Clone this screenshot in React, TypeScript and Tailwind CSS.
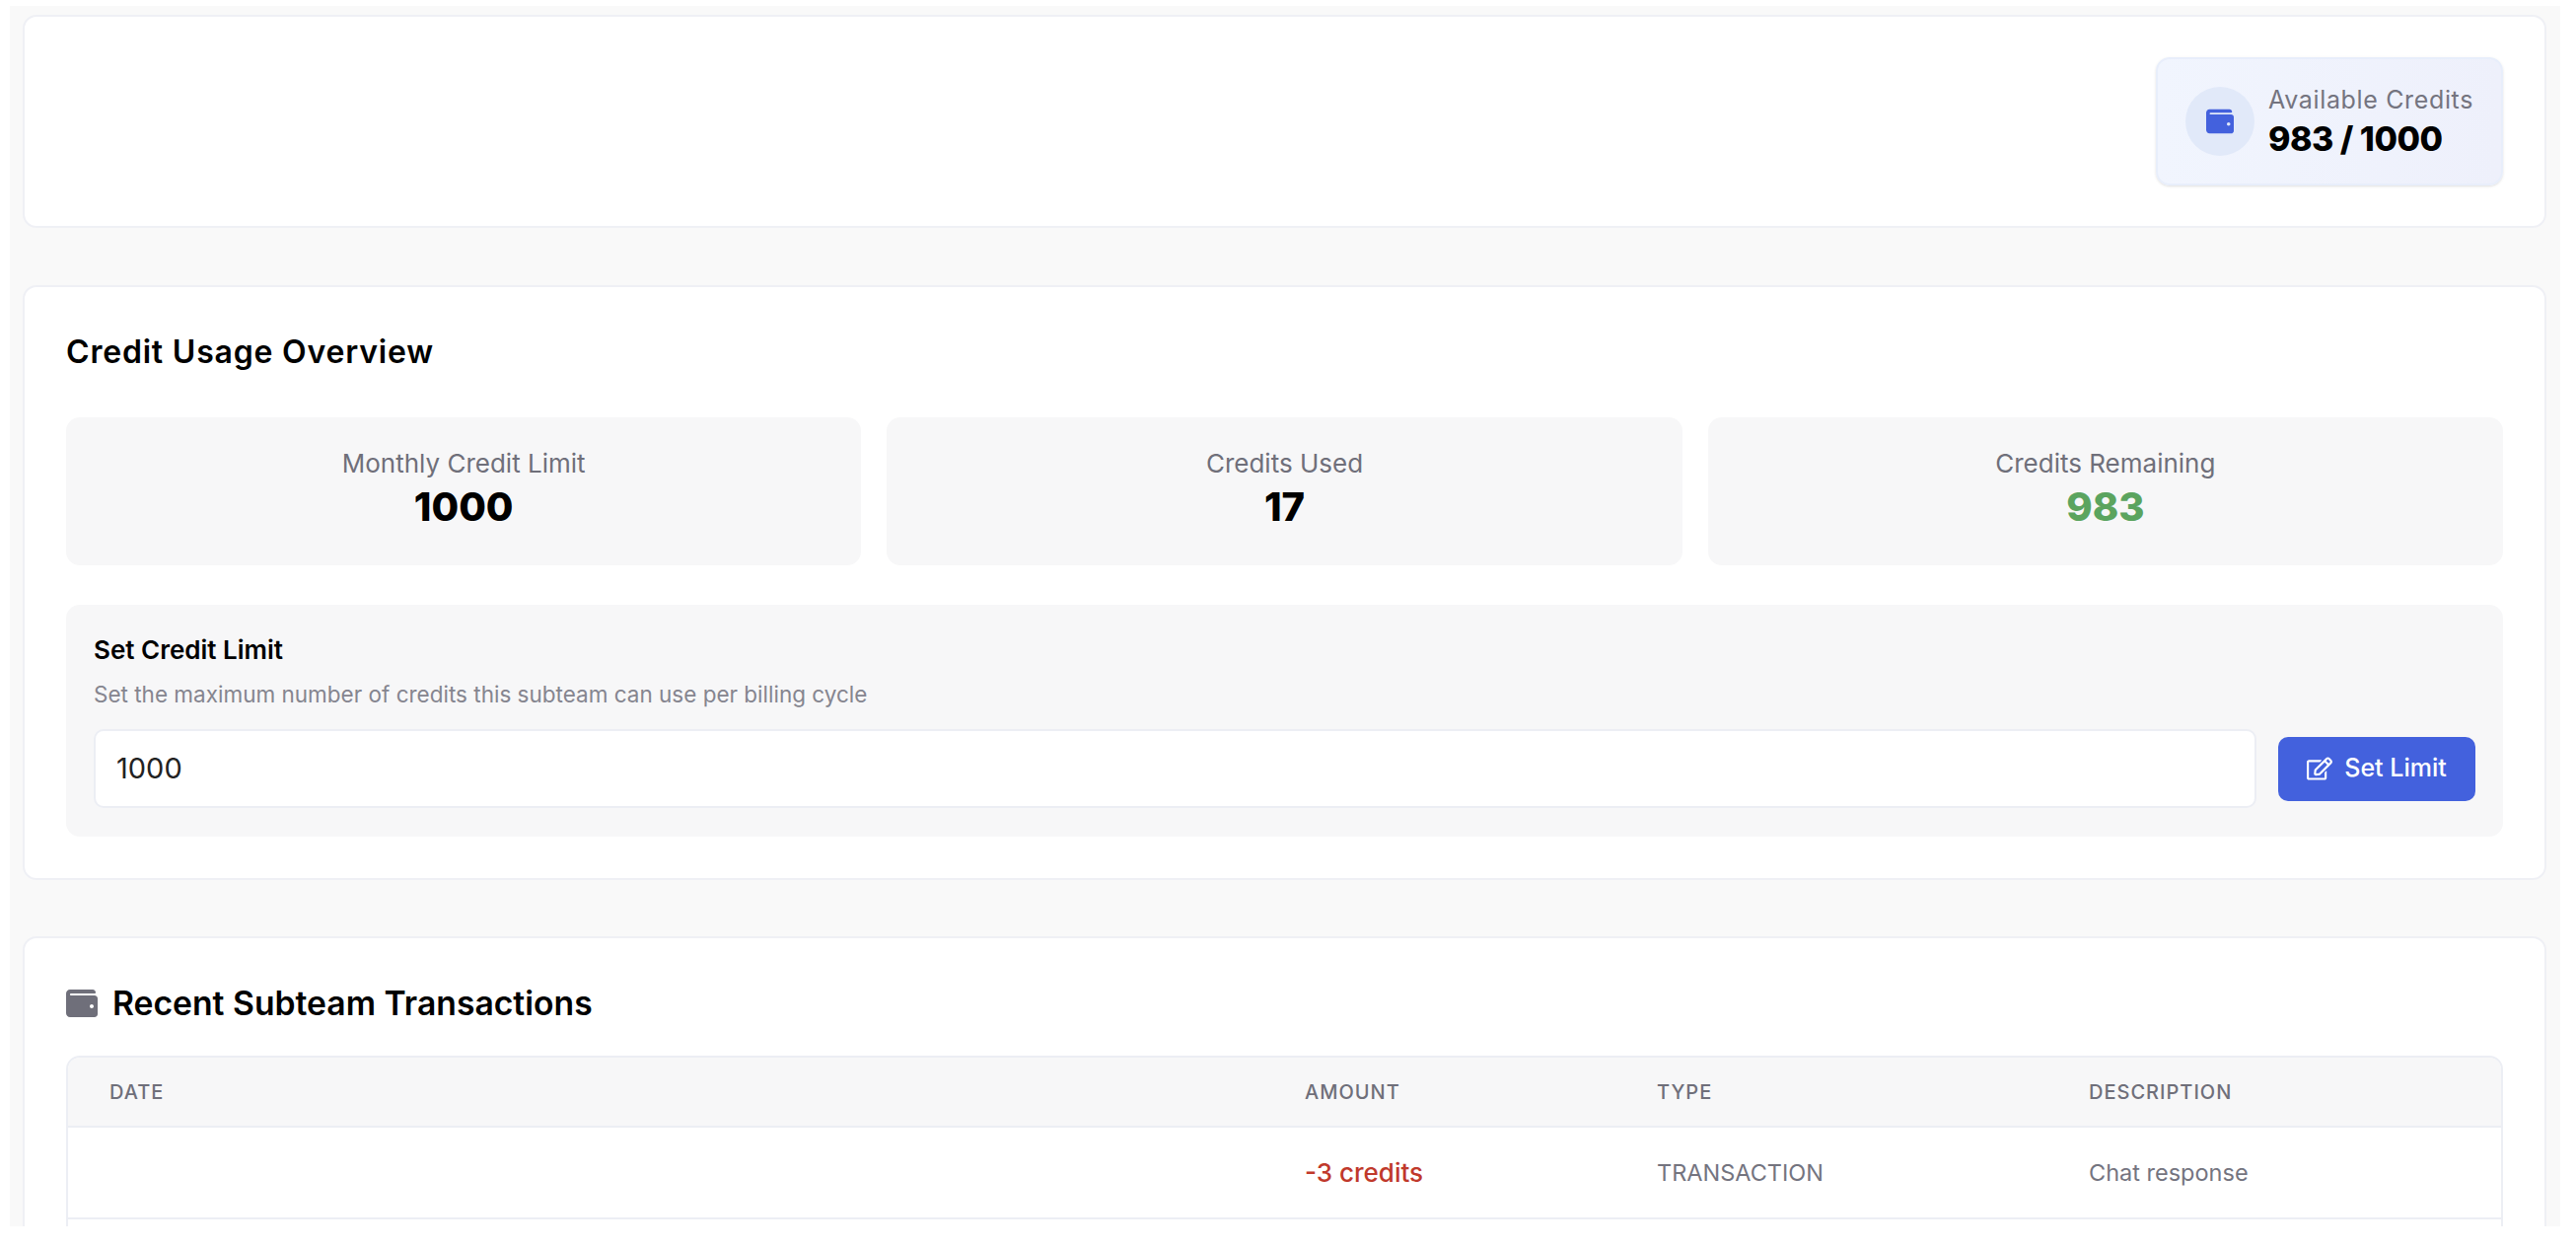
import { FaWallet, FaRegEdit } from "react-icons/fa";

const body = "font-['Inter','Liberation_Sans',sans-serif]";

const stats = [
  { label: "Monthly Credit Limit", value: "1000", color: "text-black" },
  { label: "Credits Used", value: "17", color: "text-black" },
  { label: "Credits Remaining", value: "983", color: "text-[#5ba45f]" },
];

const tableCols = "grid grid-cols-[1210px_357px_438px_1fr]";

export default function App() {
  return (
    <div className={`bg-white min-h-[1266px] pt-[6px] pl-[10px] ${body}`}>
      <div className="w-[2586px] h-[1237px] overflow-hidden bg-[#f9f9f9] pl-[13px] pr-[14px] pt-[9px] flex flex-col">
        {/* Available credits */}
        <section className="h-[216px] shrink-0 bg-white border-2 border-[#eff0f5] rounded-[14px] flex items-center justify-end pr-[42px]">
          <div className="w-[352px] h-[130px] rounded-[14px] border-2 border-[#e8eefb] bg-gradient-to-r from-[#f1f5fe] to-[#eef0fb] shadow-sm flex items-center gap-[14px] pl-[28px]">
            <div className="w-[70px] h-[70px] rounded-full bg-[#e1e9f9] flex items-center justify-center text-[#4361dd]">
              <FaWallet size={28} />
            </div>
            <div className="flex flex-col">
              <span className="text-[25px] leading-[36px] tracking-[0.65px] text-[#74747f]">Available Credits</span>
              <span className="text-[34px] leading-[44px] font-extrabold text-black tracking-[-0.5px]">983 / 1000</span>
            </div>
          </div>
        </section>

        {/* Usage overview */}
        <section className="h-[603px] mt-[58px] shrink-0 bg-white border-2 border-[#eff0f5] rounded-[14px] px-[42px] pt-[46px]">
          <h2 className="text-[32px] leading-[40px] font-semibold tracking-[0.8px] text-black">Credit Usage Overview</h2>
          <div className="grid grid-cols-3 gap-[26px] mt-[46px]">
            {stats.map((s) => (
              <div key={s.label} className="h-[150px] rounded-[14px] bg-[#f7f7f8] flex flex-col items-center pt-[29px]">
                <span className="text-[26px] leading-[36px] text-[#6f6f7a]">{s.label}</span>
                <span className={`text-[40px] leading-[52px] font-extrabold ${s.color}`}>{s.value}</span>
              </div>
            ))}
          </div>
          <div className="h-[235px] mt-[40px] rounded-[14px] bg-[#f7f7f8] px-[28px] pt-[29px]">
            <h3 className="text-[26px] leading-[34px] font-semibold text-black">Set Credit Limit</h3>
            <p className="text-[22.5px] leading-[30px] mt-[13px] text-[#85858f]">
              Set the maximum number of credits this subteam can use per billing cycle
            </p>
            <div className="flex items-center gap-[22px] mt-[20px]">
              <div className="flex-1 h-[80px] rounded-[10px] bg-white border-2 border-[#eceef4] flex items-center pl-[21px] text-[29px] text-[#222]">
                1000
              </div>
              <button className="w-[200px] h-[65px] rounded-[10px] bg-[#4361dd] text-white text-[25px] font-medium flex items-center justify-center gap-[12px]">
                <FaRegEdit size={26} />
                Set Limit
              </button>
            </div>
          </div>
        </section>

        {/* Transactions */}
        <section className="flex-1 mt-[57px] bg-white border-2 border-[#eff0f5] rounded-t-[14px] px-[42px] pt-[46px]">
          <h2 className="flex items-center gap-[15px] text-[33.7px] leading-[40px] font-semibold text-black">
            <FaWallet size={32} className="text-[#6f6f7a]" />
            Recent Subteam Transactions
          </h2>
          <div className="mt-[33px] rounded-t-[14px] border-2 border-[#eceef4]">
            <div className={`${tableCols} h-[71px] items-center bg-[#f7f7f8] border-b-2 border-[#eceef4] rounded-t-[12px] text-[20px] font-medium tracking-[1px] text-[#6f6f7a]`}>
              <span className="pl-[42px]">DATE</span>
              <span className="pl-[44px]">AMOUNT</span>
              <span className="pl-[44px]">TYPE</span>
              <span className="pl-[44px]">DESCRIPTION</span>
            </div>
            <div className={`${tableCols} h-[93px] items-center border-b-2 border-[#eceef4] text-[23.5px] text-[#74747f]`}>
              <span />
              <span className="pl-[44px] text-[26px] font-medium text-[#c0392b]">-3 credits</span>
              <span className="pl-[44px]">TRANSACTION</span>
              <span className="pl-[44px]">Chat response</span>
            </div>
            <div className="h-[93px]" />
          </div>
        </section>
      </div>
    </div>
  );
}
